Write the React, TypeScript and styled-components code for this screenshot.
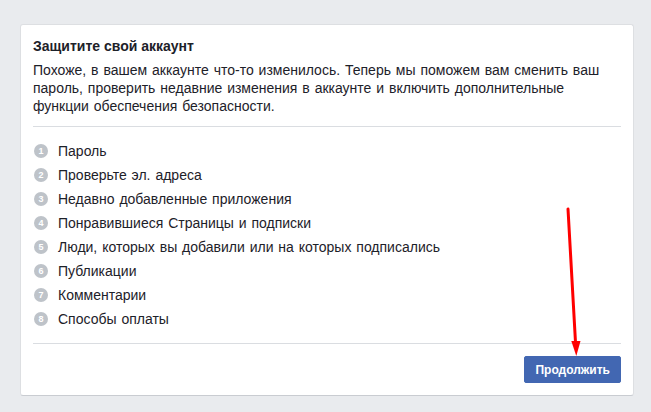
import styled, { createGlobalStyle } from 'styled-components'

const Global = createGlobalStyle`
  html, body {
    margin: 0;
    padding: 0;
    background: #e9ebee;
  }
  body {
    font-family: "Liberation Sans", Arial, Helvetica, sans-serif;
    color: #1d2129;
  }
`;

const Page = styled.div`
  position: relative;
  width: 651px;
  height: 412px;
  padding: 24px 0 0 20px;
  box-sizing: border-box;
  overflow: hidden;
`;

const Card = styled.div`
  width: 614px;
  box-sizing: border-box;
  background: #fff;
  border: 1px solid #dddfe2;
  border-bottom-color: #c9ccd1;
  border-radius: 3px;
  padding: 0 12px;
`;

const Header = styled.div`
  padding: 12px 0 11px;
  border-bottom: 1px solid #dadde1;
`;

const Title = styled.h2`
  margin: 0 0 6px;
  font-size: 14px;
  line-height: 18px;
  font-weight: bold;
  color: #1d2129;
`;

const Intro = styled.p`
  margin: 0;
  font-size: 14px;
  line-height: 18px;
  word-spacing: 1px;
  color: #1d2129;
`;

const Steps = styled.ol`
  list-style: none;
  margin: 0;
  padding: 12px 0;
  border-bottom: 1px solid #dadde1;
`;

const Step = styled.li`
  display: flex;
  align-items: center;
  height: 24px;
  font-size: 14px;
  word-spacing: 1px;
  color: #1d2129;
`;

const Num = styled.span`
  flex: none;
  width: 14px;
  height: 14px;
  margin: 0 10px 0 1px;
  border-radius: 50%;
  background: #bec3c9;
  color: #fff;
  font-size: 9px;
  font-weight: bold;
  line-height: 14px;
  text-align: center;
`;

const Footer = styled.div`
  display: flex;
  justify-content: flex-end;
  padding: 12px 0;
`;

const Button = styled.button`
  height: 27px;
  padding: 0 10px;
  border: 1px solid #4267b2;
  border-radius: 2px;
  background: #4267b2;
  color: #fff;
  font-family: inherit;
  font-size: 12px;
  font-weight: bold;
  cursor: pointer;
`;

const Arrow = styled.svg`
  position: absolute;
  left: 0;
  top: 0;
  pointer-events: none;
`;

const STEPS = [
  'Пароль',
  'Проверьте эл. адреса',
  'Недавно добавленные приложения',
  'Понравившиеся Страницы и подписки',
  'Люди, которых вы добавили или на которых подписались',
  'Публикации',
  'Комментарии',
  'Способы оплаты',
]

export default function App() {
  return (
    <Page>
      <Global />
      <Card>
        <Header>
          <Title>Защитите свой аккаунт</Title>
          <Intro>
            Похоже, в вашем аккаунте что-то изменилось. Теперь мы поможем вам сменить ваш
            пароль, проверить недавние изменения в аккаунте и включить дополнительные
            функции обеспечения безопасности.
          </Intro>
        </Header>
        <Steps>
          {STEPS.map((s, i) => (
            <Step key={s}>
              <Num>{i + 1}</Num>
              {s}
            </Step>
          ))}
        </Steps>
        <Footer>
          <Button>Продолжить</Button>
        </Footer>
      </Card>
      {/* red pointer drawn over the screenshot */}
      <Arrow width="651" height="412" viewBox="0 0 651 412">
        <line x1="568" y1="209" x2="575.6" y2="344" stroke="#f00" strokeWidth="3" strokeLinecap="round" />
        <polygon points="571.3,341 580.5,341 576.3,356" fill="#f00" />
      </Arrow>
    </Page>
  )
}
